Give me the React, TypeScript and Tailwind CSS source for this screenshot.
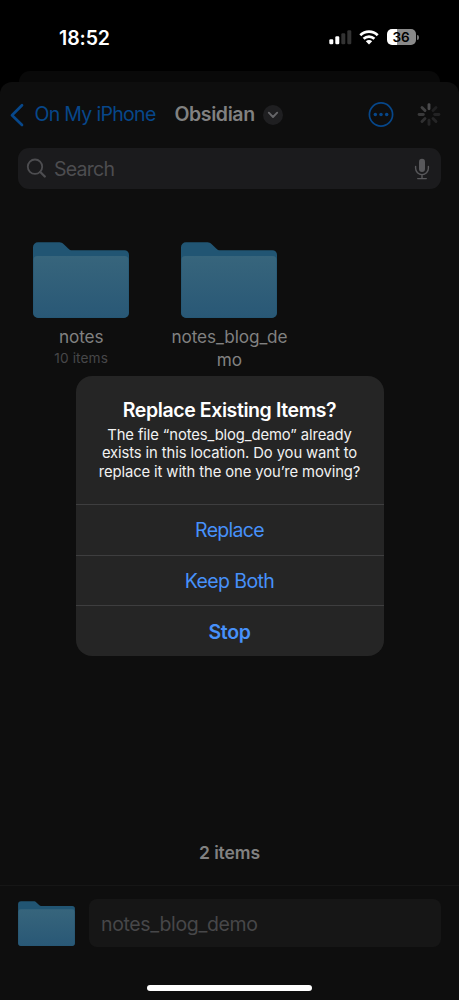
import { useId } from "react";

function Folder({ className }: { className: string }) {
  const id = useId();
  return (
    <svg viewBox="0 0 96 76" className={className} aria-hidden="true">
      <defs>
        <linearGradient id={id} x1="0" y1="0" x2="0" y2="1">
          <stop offset="0" stopColor="#37657c" />
          <stop offset="1" stopColor="#295876" />
        </linearGradient>
      </defs>
      <path
        d="M5 .3H26.500C28.300 .3 29.300 1 30.500 2L35.500 6.700C36.600 7.700 37.600 8.300 39 8.300H91.500A4.500 4.500 0 0 1 96 12.800V71A5 5 0 0 1 91 76H5A5 5 0 0 1 0 71V5.300A5 5 0 0 1 5 .3Z"
        fill="#215573"
      />
      <path
        d="M4.500 14H91.500A4 4 0 0 1 95.500 18V71A4.500 4.500 0 0 1 91 75.500H5A4.500 4.500 0 0 1 .5 71V18A4 4 0 0 1 4.500 14Z"
        fill={`url(#${id})`}
      />
    </svg>
  );
}

function StatusBar() {
  return (
    <header className="flex h-[71px] shrink-0 items-start pl-[59px] pr-[40px] pt-[26px] text-white">
      <span className="pt-px text-[19.500px] font-semibold leading-[23px] tracking-[-0.1px]">18:52</span>
      <div className="ml-auto flex items-start pt-[2.500px]">
        <svg width="23" height="17" viewBox="0 0 23 17" className="mt-[0.500px]">
          <rect x="0.3" y="10.300" width="4" height="5" rx="1.200" fill="#fff" />
          <rect x="6.300" y="7.200" width="4" height="8.100" rx="1.200" fill="#fff" />
          <rect x="12.300" y="4.200" width="4" height="11.100" rx="1.200" fill="#333" />
          <rect x="18.300" y="1.200" width="4" height="14.100" rx="1.200" fill="#333" />
        </svg>
        <svg width="20" height="16" viewBox="0 0 20 16" className="ml-[7px]">
          <g fill="none" stroke="#fff" strokeWidth="2.700">
            <path d="M1.300 6.200C6.200 1.400 13.800 1.400 18.700 6.200" />
            <path d="M4.600 9.700C7.700 6.800 12.300 6.800 15.400 9.700" />
          </g>
          <path d="M10 15.400L6.800 12.200C8.600 10.500 11.400 10.500 13.200 12.200Z" fill="#fff" />
        </svg>
        <div className="ml-[8px] mt-[0.500px] flex h-[16px] w-[29px] items-center justify-center overflow-hidden rounded-[5px] bg-[linear-gradient(to_right,#fff_36%,#8a8a8a_36%)] pr-px text-[13.500px] font-semibold leading-[16px] text-black">
          36
        </div>
        <div className="ml-[1px] mt-[6px] h-[5px] w-[2px] rounded-r-full bg-[#777]" />
      </div>
    </header>
  );
}

function NavBar() {
  return (
    <nav className="flex h-[66px] shrink-0 items-center pb-px">
      <svg width="16" height="24" viewBox="0 0 16 24" className="ml-[9px]">
        <path
          d="M13 2.300L3 12.200L13 22"
          fill="none"
          stroke="#07478a"
          strokeWidth="2.700"
          strokeLinecap="round"
          strokeLinejoin="round"
        />
      </svg>
      <span className="ml-[9.500px] w-[121.500px] whitespace-nowrap pt-px text-[19.500px] tracking-[-0.690px] text-[#07478a]">
        On My iPhone
      </span>
      <span className="ml-[18.500px] w-[82px] whitespace-nowrap pt-px text-[19.500px] font-semibold tracking-[-0.4px] text-[#818181]">
        Obsidian
      </span>
      <div className="ml-[6.500px] flex size-[20px] items-center justify-center rounded-full bg-[#1f1f21]">
        <svg width="12" height="8" viewBox="0 0 12 8">
          <path
            d="M1.800 1.700L6 6L10.200 1.700"
            fill="none"
            stroke="#666669"
            strokeWidth="1.900"
            strokeLinecap="round"
            strokeLinejoin="round"
          />
        </svg>
      </div>
      <svg width="26" height="26" viewBox="0 0 26 26" className="ml-auto">
        <circle cx="13" cy="12.500" r="11.600" fill="none" stroke="#07478a" strokeWidth="1.700" />
        <circle cx="7.300" cy="12.500" r="1.750" fill="#07478a" />
        <circle cx="13" cy="12.500" r="1.750" fill="#07478a" />
        <circle cx="18.700" cy="12.500" r="1.750" fill="#07478a" />
      </svg>
      <svg
        width="24"
        height="24"
        viewBox="-12 -11.500 24 24"
        className="ml-[23px] mr-[18px]"
        strokeWidth="2.900"
        strokeLinecap="round"
      >
        <path d="M0 -5.700V-9.900" stroke="#4b4b4d" />
        <path d="M4 -4L7 -7" stroke="#202021" />
        <path d="M5.700 0H9.900" stroke="#232324" />
        <path d="M4 4L7 7" stroke="#252526" />
        <path d="M0 5.700V9.900" stroke="#252526" />
        <path d="M-4 4L-7 7" stroke="#303031" />
        <path d="M-5.700 0H-9.900" stroke="#39393a" />
        <path d="M-4 -4L-7 -7" stroke="#404041" />
      </svg>
    </nav>
  );
}

function SearchField() {
  return (
    <div className="mx-[18px] flex h-[41px] shrink-0 items-center rounded-[11px] bg-[#1b1b1d] pl-[8px] pr-[11px]">
      <svg width="21" height="21" viewBox="0 0 21 21" fill="none" stroke="#4d4d50" strokeLinecap="round">
        <circle cx="9" cy="8.700" r="7.200" strokeWidth="1.800" />
        <path d="M14.300 14L18.800 18.500" strokeWidth="2.300" />
      </svg>
      <span className="ml-[7px] pt-[2px] text-[19.500px] tracking-[-0.750px] text-[#4d4d50]">Search</span>
      <svg width="16" height="22" viewBox="0 0 16 22" className="ml-auto" fill="none" stroke="#58585b">
        <rect x="5" y="0.700" width="6" height="13.200" rx="3" fill="#58585b" stroke="none" />
        <path
          d="M1.600 8.500V10.300A6.400 6.400 0 0 0 14.400 10.300V8.500M8 17V20.300M3.700 20.600H12.300"
          strokeWidth="1.400"
          strokeLinecap="round"
        />
      </svg>
    </div>
  );
}

function FolderItem({ lines, detail }: { lines: string[]; detail?: string }) {
  return (
    <div className="flex w-[148.300px] flex-col items-center">
      <Folder className="h-[76px] w-[96px]" />
      <div className="mt-[7px] text-center text-[17.200px] leading-[23px] tracking-[-0.1px] text-[#818181]">
        {lines.map((line) => (
          <div key={line}>{line}</div>
        ))}
      </div>
      {detail && <div className="text-[13.700px] leading-[21px] tracking-[0.1px] text-[#474749]">{detail}</div>}
    </div>
  );
}

function ReplaceDialog() {
  return (
    <div
      role="alertdialog"
      className="absolute left-[75.500px] top-[376px] flex h-[280px] w-[308px] flex-col overflow-hidden rounded-[16px] bg-[#252525] text-center"
    >
      <div className="h-[128px] pt-[22px]">
        <h2 className="text-[19.500px] font-semibold leading-[24px] tracking-[-0.4px] text-white">
          Replace Existing Items?
        </h2>
        <p className="mt-[4px] whitespace-nowrap text-[14.800px] leading-[18.300px] tracking-[-0.1px] text-[#f2f2f2]">
          The file “notes_blog_demo” already
          <br />
          exists in this location. Do you want to
          <br />
          replace it with the one you’re moving?
        </p>
      </div>
      <button className="h-[51px] border-t border-[#3e3e3f] pt-[2px] text-[19.500px] tracking-[-0.7px] text-[#4791fa]">
        Replace
      </button>
      <button className="h-[50px] border-t border-[#3e3e3f] pt-[3px] text-[19.500px] tracking-[-0.6px] text-[#4791fa]">
        Keep Both
      </button>
      <button className="h-[51px] border-t border-[#3e3e3f] pt-[3px] text-[19.500px] font-semibold tracking-[-0.4px] text-[#4791fa]">
        Stop
      </button>
    </div>
  );
}

export default function App() {
  return (
    <div className="relative flex h-[1000px] w-[459px] flex-col overflow-hidden bg-black font-['Inter',sans-serif]">
      <StatusBar />
      <div className="mx-[19px] h-[11px] shrink-0 rounded-t-[11px] bg-[#090909]" />
      <main className="flex flex-1 flex-col rounded-t-[12px] bg-[#0e0e0e]">
        <NavBar />
        <SearchField />
        <div className="flex flex-1 pl-[7px] pt-[53px]">
          <FolderItem lines={["notes"]} detail="10 items" />
          <FolderItem lines={["notes_blog_de", "mo"]} />
        </div>
        <div className="flex h-[66px] shrink-0 items-center justify-center pt-[2px] text-[17.500px] font-semibold tracking-[-0.1px] text-[#818181]">
          2 items
        </div>
        <footer className="flex h-[115px] shrink-0 flex-col border-t border-[#161616]">
          <div className="flex items-center pl-[18px] pr-[18px] pt-[13px]">
            <Folder className="h-[45px] w-[57px]" />
            <div className="ml-[14px] flex h-[48px] flex-1 items-center rounded-[8px] bg-[#161616] pl-[12px] pt-[3px] text-[19.500px] tracking-[-0.350px] text-[#474749]">
              notes_blog_demo
            </div>
          </div>
          <div className="mx-auto mt-[38px] h-[6px] w-[165px] rounded-full bg-white" />
        </footer>
      </main>
      <ReplaceDialog />
    </div>
  );
}
